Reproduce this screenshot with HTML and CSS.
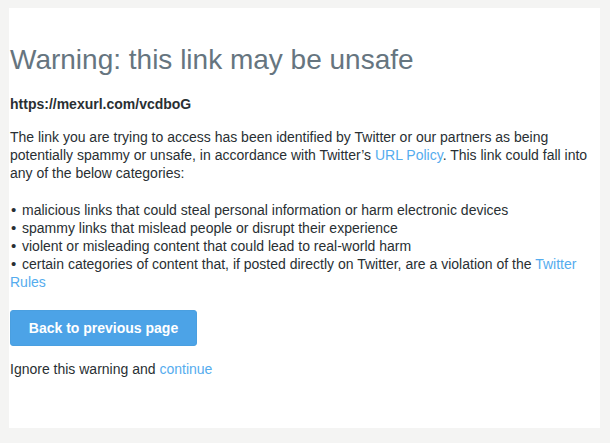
FILE: index.html
```html
<!DOCTYPE html>
<html>
<head>
<meta charset="utf-8">
<link rel="stylesheet" href="styles.css">
</head>
<body>
<div class="card">
  <h1 class="title">Warning: this link may be unsafe</h1>
  <p class="url">https://mexurl.com/vcdboG</p>
  <p class="text">The link you are trying to access has been identified by Twitter or our partners as being potentially spammy or unsafe, in accordance with Twitter’s <a href="#">URL Policy</a>. This link could fall into any of the below categories:</p>
  <ul class="list">
    <li><span class="dot">•</span>malicious links that could steal personal information or harm electronic devices</li>
    <li><span class="dot">•</span>spammy links that mislead people or disrupt their experience</li>
    <li><span class="dot">•</span>violent or misleading content that could lead to real-world harm</li>
    <li><span class="dot">•</span>certain categories of content that, if posted directly on Twitter, are a violation of the <a href="#">Twitter Rules</a></li>
  </ul>
  <div class="actions">
    <button class="btn">Back to previous page</button>
  </div>
  <p class="ignore">Ignore this warning and <a href="#">continue</a></p>
</div>
</body>
</html>
```
FILE: styles.css
```css
html, body {
  margin: 0;
  padding: 0;
  background: #f4f4f3;
}
body {
  padding: 8px 10px 0 9px;
  font-family: "Liberation Sans", Arial, sans-serif;
  font-size: 14px;
  line-height: 18px;
  color: #292f33;
}
.card {
  background: #fff;
  height: 420px;
  padding: 0 8px 0 1px;
  box-sizing: border-box;
}
.title {
  margin: 0;
  padding-top: 35px;
  font-size: 28px;
  line-height: 34px;
  font-weight: normal;
  color: #66757f;
}
.url {
  margin: 18px 0 0;
  font-weight: bold;
}
.text {
  margin: 15px 0 0;
}
a {
  color: #55acee;
  text-decoration: none;
}
.list {
  list-style: none;
  margin: 19px 0 0;
  padding: 0;
}
.dot {
  display: inline-block;
  width: 11px;
  margin-left: 1px;
  font-size: 15px;
}
.actions {
  margin-top: 19px;
}
.btn {
  display: block;
  font-family: "Liberation Sans", Arial, sans-serif;
  font-size: 14px;
  font-weight: bold;
  color: #fff;
  background: #4ca3e7;
  border: 1px solid #4a9fe0;
  border-radius: 3px;
  width: 187px;
  height: 36px;
  padding: 0;
}
.ignore {
  margin: 14px 0 0;
}
```
